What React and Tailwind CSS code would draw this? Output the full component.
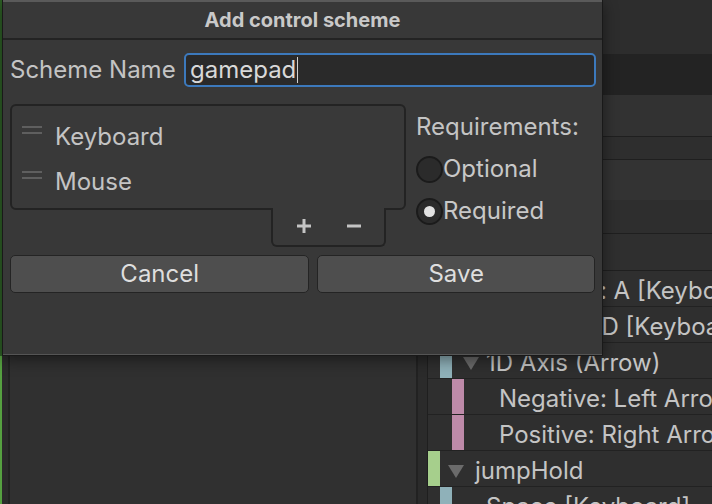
import React from "react";

const ROWS = [
  { label: "Negative: A [Keyboard]", bar: "part" },
  { label: "Positive: D [Keyboard]", bar: "part" },
  { label: "1D Axis (Arrow)", bar: "composite", arrow: true },
  { label: "Negative: Left Arrow", bar: "part" },
  { label: "Positive: Right Arrow", bar: "part" },
  { label: "jumpHold", bar: "action", arrow: true },
  { label: "Space [Keyboard]", bar: "binding" },
];

function Triangle() {
  return (
    <svg width="16" height="14" viewBox="0 0 16 14" className="shrink-0">
      <path d="M0 1 H16 L8 14 Z" fill="#6b6b6b" />
    </svg>
  );
}

function TreeRow({ row }) {
  return (
    <div className="flex h-[36px] shrink-0 items-stretch border-b border-[#222] bg-[#2f2f2f] text-[24px] text-[#c4c4c4]">
      {row.bar === "action" && (
        <>
          <div className="w-[12px] shrink-0 bg-[#a6cf8c]" />
          <div className="flex items-center gap-[11px] pl-[8px] pt-[4px]">
            <Triangle />
            <span className="whitespace-nowrap">{row.label}</span>
          </div>
        </>
      )}
      {row.bar === "composite" && (
        <>
          <div className="w-[12px] shrink-0" />
          <div className="w-[12px] shrink-0 bg-[#8fb1b9]" />
          <div className="flex items-center gap-[7px] pl-[11px] pt-[4px]">
            <Triangle />
            <span className="whitespace-nowrap">{row.label}</span>
          </div>
        </>
      )}
      {row.bar === "binding" && (
        <>
          <div className="w-[12px] shrink-0" />
          <div className="w-[12px] shrink-0 bg-[#8fb1b9]" />
          <div className="flex items-center pl-[34px] pt-[4px]">
            <span className="whitespace-nowrap">{row.label}</span>
          </div>
        </>
      )}
      {row.bar === "part" && (
        <>
          <div className="w-[24px] shrink-0" />
          <div className="w-[12px] shrink-0 bg-[#be8aa9]" />
          <div className="flex items-center pl-[35px] pt-[4px]">
            <span className="whitespace-nowrap">{row.label}</span>
          </div>
        </>
      )}
    </div>
  );
}

function Handle() {
  return (
    <div className="flex w-[20px] flex-col gap-[4px] self-start pt-[12px]">
      <div className="h-[2px] bg-[#5f5f5f]" />
      <div className="h-[2px] bg-[#5f5f5f]" />
    </div>
  );
}

function Radio({ checked, label }) {
  return (
    <div className="flex h-[42px] items-center">
      <div className="flex h-[27px] w-[27px] items-center justify-center rounded-full border-2 border-[#1b1b1b] bg-[#2b2b2b]">
        {checked && <div className="h-[11px] w-[11px] rounded-full bg-[#e2e2e2]" />}
      </div>
      <span className="text-[24px] text-[#c8c8c8]">{label}</span>
    </div>
  );
}

export default function App() {
  return (
    <div className="relative flex h-[504px] w-[712px] overflow-hidden bg-[#2c2c2c] font-['Inter',sans-serif]">
      {/* green edge */}
      <div className="flex w-[2px] shrink-0 flex-col">
        <div className="h-[356px] bg-[#2d5f25]" />
        <div className="flex-1 bg-[#55a040]" />
      </div>

      {/* left panel */}
      <div className="flex w-[416px] shrink-0">
        <div className="w-[6px] bg-[#2b2b2b]" />
        <div className="w-[2px] bg-[#222]" />
        <div className="flex-1 bg-[#303030]" />
        <div className="w-[2px] bg-[#222]" />
      </div>

      {/* right panel */}
      <div className="flex min-w-0 flex-1 flex-col overflow-hidden">
        <div className="h-[2px] bg-[#5aa843]" />
        <div className="flex flex-1">
          <div className="w-[9px] shrink-0 bg-[#2b2b2b]" />
          <div className="w-[1px] shrink-0 bg-[#1f1f1f]" />
          <div className="flex min-w-0 flex-1 flex-col">
            <div className="h-[54px] shrink-0 bg-[#2d2d2d]" />
            <div className="h-[41px] shrink-0 bg-[#232323]" />
            <div className="h-[42px] shrink-0 border-b border-[#1f1f1f] bg-[#323232]" />
            <div className="h-[23px] shrink-0 border-b border-[#1f1f1f] bg-[#2e2e2e]" />
            <div className="h-[40px] shrink-0 bg-[#333333]" />
            <div className="h-[34px] shrink-0 border-b border-[#1f1f1f] bg-[#2e2e2e]" />
            <div className="h-[37px] shrink-0 border-b border-[#1f1f1f] bg-[#2f2f2f]" />
            {ROWS.map((r) => (
              <TreeRow key={r.label} row={r} />
            ))}
          </div>
        </div>
      </div>

      {/* dialog window */}
      <div className="absolute left-[2px] top-0 flex h-[356px] w-[601px] flex-col border border-t-0 border-[#191919] bg-[#383838] shadow-[0_4px_14px_rgba(0,0,0,0.45)]">
        <div className="h-[2px] bg-[#5a5a5a]" />
        <div className="flex h-[38px] items-center justify-center border-b-2 border-[#232323] pb-[1px] text-[20px] font-bold text-[#c9c9c9]">
          Add control scheme
        </div>

        <div className="flex flex-1 flex-col px-[7px] pt-[13px]">
          <div className="flex h-[34px] items-center">
            <span className="w-[174px] text-[24px] text-[#c4c4c4]">Scheme Name</span>
            <div className="mr-[-1px] flex h-[34px] flex-1 items-center rounded-[5px] border-2 border-[#3c79bc] bg-[#2a2a2a] pl-[4px]">
              <span className="text-[24px] text-[#d8d8d8]">gamepad</span>
              <div className="ml-[1px] h-[26px] w-[1px] bg-[#d0d0d0]" />
            </div>
          </div>

          <div className="mt-[17px] flex">
            <div className="flex w-[396px] flex-col">
              <div className="relative flex h-[106px] flex-col rounded-[6px] border-2 border-[#232323] bg-[#393939] pl-[10px] pt-[8px]">
                <div className="flex h-[45px] items-center gap-[13px]">
                  <Handle />
                  <span className="text-[24px] text-[#c4c4c4]">Keyboard</span>
                </div>
                <div className="flex h-[45px] items-center gap-[13px]">
                  <Handle />
                  <span className="text-[24px] text-[#c4c4c4]">Mouse</span>
                </div>
              </div>
              <div className="relative z-10 ml-[261px] mt-[-2px] flex h-[39px] w-[115px] items-center justify-center gap-[34px] rounded-b-[6px] border-2 border-t-0 border-[#232323] bg-[#393939] pb-[2px]">
                <svg width="16" height="16" viewBox="0 0 16 16">
                  <path d="M8 1 V15 M1 8 H15" stroke="#c4c4c4" strokeWidth="3" />
                </svg>
                <svg width="16" height="16" viewBox="0 0 16 16">
                  <path d="M1 8 H15" stroke="#c4c4c4" strokeWidth="3" />
                </svg>
              </div>
            </div>

            <div className="ml-[10px] flex flex-col">
              <span className="mt-[9px] text-[24px] leading-[28px] text-[#c4c4c4]">Requirements:</span>
              <div className="mt-[7px]">
                <Radio label="Optional" />
                <Radio checked label="Required" />
              </div>
            </div>
          </div>

          <div className="mt-[8px] flex gap-[8px]">
            <button className="flex h-[38px] w-[301px] items-center justify-center rounded-[5px] border border-[#242424] bg-[#4e4e4e] text-[24px] text-[#dedede]">
              Cancel
            </button>
            <button className="flex h-[38px] w-[279px] items-center justify-center rounded-[5px] border border-[#242424] bg-[#4e4e4e] text-[24px] text-[#dedede]">
              Save
            </button>
          </div>
        </div>
        <div className="h-[1px] bg-[#555]" />
      </div>
    </div>
  );
}
